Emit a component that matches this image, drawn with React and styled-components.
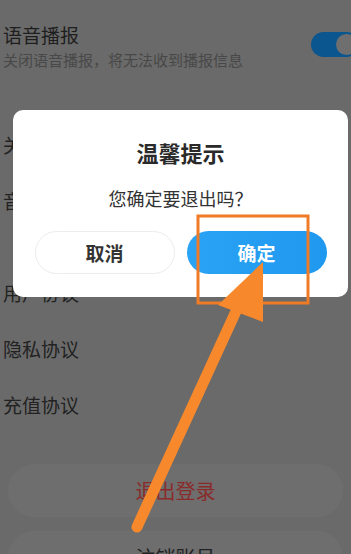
import React from "react";
import styled, { createGlobalStyle } from "styled-components";

const GlobalStyle = createGlobalStyle`
  html, body {
    margin: 0;
    padding: 0;
    background: #6a6a6a;
  }
  body {
    font-family: "Noto Sans CJK SC", "Noto Sans", sans-serif;
  }
`;

const Screen = styled.div`
  position: relative;
  width: 351px;
  height: 554px;
  overflow: hidden;
  background: #6a6a6a;
`;

const Page = styled.div`
  display: flex;
  flex-direction: column;
  padding-top: 22px;
`;

const VoiceRow = styled.div`
  display: flex;
  align-items: flex-start;
  justify-content: space-between;
  padding-left: 3px;
`;

const VoiceText = styled.div`
  display: flex;
  flex-direction: column;
  gap: 2px;
`;

const VoiceTitle = styled.div`
  font-size: 19px;
  line-height: 26px;
  color: #1e1e1e;
`;

const VoiceSub = styled.div`
  font-size: 15px;
  line-height: 20px;
  color: #484848;
`;

const Toggle = styled.div`
  position: relative;
  width: 48px;
  height: 25px;
  margin-top: 10px;
  margin-right: -8px;
  border-radius: 13px;
  background: #0b568f;
  &::after {
    content: "";
    position: absolute;
    top: 2px;
    left: 25px;
    width: 21px;
    height: 21px;
    border-radius: 50%;
    background: #6f6f6f;
  }
`;

const Group = styled.div`
  display: flex;
  flex-direction: column;
  margin-top: ${(p) => p.$top}px;
`;

const Row = styled.div`
  height: 56px;
  display: flex;
  align-items: center;
  padding-left: 3px;
  font-size: 19px;
  color: #222;
`;

const ActionCard = styled.div`
  margin: ${(p) => p.$top}px 8px 0;
  height: 53px;
  border-radius: 26px;
  background: #6e6e6e;
  display: flex;
  align-items: center;
  justify-content: center;
  font-size: 20px;
  color: ${(p) => (p.$danger ? "#8a2b2b" : "#222")};
`;

const Overlay = styled.div`
  position: absolute;
  inset: 0;
  padding: 110px 3px 0 13px;
`;

const Dialog = styled.div`
  height: 187px;
  background: #fff;
  border-radius: 10px;
  display: flex;
  flex-direction: column;
  align-items: center;
  box-sizing: border-box;
  padding-top: 27px;
`;

const Title = styled.div`
  font-size: 22px;
  font-weight: 700;
  line-height: 30px;
  color: #2a2a2a;
`;

const Message = styled.div`
  margin-top: 19px;
  font-size: 18px;
  line-height: 24px;
  color: #333;
`;

const Buttons = styled.div`
  margin-top: 21px;
  display: grid;
  grid-template-columns: 140px 140px;
  gap: 12px;
`;

const Button = styled.div`
  height: 43px;
  border-radius: 22px;
  box-sizing: border-box;
  display: flex;
  align-items: center;
  justify-content: center;
  font-size: 19px;
  font-weight: 700;
  color: ${(p) => (p.$primary ? "#fff" : "#333")};
  background: ${(p) =>
    p.$primary ? "linear-gradient(90deg, #2aa3f5, #1f98ef)" : "#fff"};
  border: ${(p) => (p.$primary ? "none" : "1px solid #ececec")};
`;

const Annotation = styled.svg`
  position: absolute;
  inset: 0;
  pointer-events: none;
`;

export default function App() {
  return (
    <>
      <GlobalStyle />
      <Screen>
        <Page>
          <VoiceRow>
            <VoiceText>
              <VoiceTitle>语音播报</VoiceTitle>
              <VoiceSub>关闭语音播报，将无法收到播报信息</VoiceSub>
            </VoiceText>
            <Toggle />
          </VoiceRow>
          <Group $top={46}>
            <Row>关于我们</Row>
            <Row>音效设置</Row>
          </Group>
          <Group $top={36}>
            <Row>用户协议</Row>
            <Row>隐私协议</Row>
            <Row>充值协议</Row>
          </Group>
          <ActionCard $top={32} $danger>退出登录</ActionCard>
          <ActionCard $top={14}>注销账号</ActionCard>
        </Page>

        <Overlay>
          <Dialog>
            <Title>温馨提示</Title>
            <Message>您确定要退出吗？</Message>
            <Buttons>
              <Button>取消</Button>
              <Button $primary>确定</Button>
            </Buttons>
          </Dialog>
        </Overlay>

        <Annotation width="351" height="554" viewBox="0 0 351 554">
          <rect x="198" y="216" width="110" height="87" fill="none" stroke="#ef7b27" strokeWidth="3" />
          <line x1="137" y1="527" x2="243" y2="296" stroke="#f7892c" strokeWidth="11" strokeLinecap="round" />
          <polygon points="263,262 218,305 263,322" fill="#f7892c" />
        </Annotation>
      </Screen>
    </>
  );
}
